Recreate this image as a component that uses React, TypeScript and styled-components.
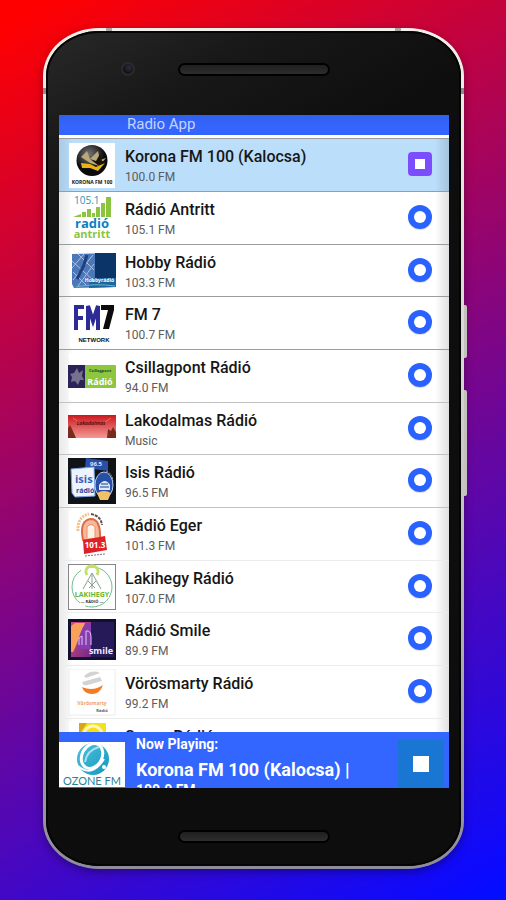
import React, { useState } from "react";
import styled, { createGlobalStyle, css } from "styled-components";

const GlobalStyle = createGlobalStyle`
  *, *::before, *::after { box-sizing: border-box; }
  body {
    margin: 0;
    font-family: Roboto, "Open Sans", sans-serif;
    -webkit-font-smoothing: antialiased;
  }
`;

const Page = styled.main`
  min-height: 100vh;
  padding: 28px 42px 30px 43px;
  display: flex;
  justify-content: center;
  align-items: flex-start;
  background: linear-gradient(150deg, #ff0000 2%, #0a0aff 97%, #0010ff 100%);
`;

const Phone = styled.div`
  position: relative;
  flex: 1;
  max-width: 480px;
  padding: 3px;
  border-radius: 56px / 48px;
  background: linear-gradient(180deg, #f2eeea 0%, #d8d6d2 40%, #8d8c98 100%);
  box-shadow: 0 3px 8px rgba(0, 0, 0, 0.35);
`;

const SideKey = styled.span<{ $top: number; $height: number }>`
  position: absolute;
  right: -3px;
  top: ${(p) => p.$top}px;
  width: 3px;
  height: ${(p) => p.$height}px;
  border-radius: 0 2px 2px 0;
  background: #c4c1be;
`;

const Antenna = styled.span<{ $side: "left" | "right" }>`
  position: absolute;
  top: 0;
  ${(p) => p.$side}: 63px;
  width: 6px;
  height: 3px;
  background: #a8a4a2;
`;

const SideAntenna = styled.span<{ $side: "left" | "right" }>`
  position: absolute;
  top: 60px;
  ${(p) => p.$side}: 0;
  width: 3px;
  height: 6px;
  background: #8f8b8a;
`;

const Body = styled.div`
  border-radius: 53px / 45px;
  padding: 0 12px 0 13px;
  background: linear-gradient(150deg, #292929 0%, #181818 12%, #0e0e0e 26%, #0d0d0d 100%);
  box-shadow: inset 0 0 0 2px #050505;
`;

const TopBezel = styled.div`
  height: 84px;
  padding: 9px 0 17px;
  display: grid;
  grid-template-columns: 1fr 152px 1fr;
  align-items: center;
  align-content: center;
`;

const Camera = styled.span`
  width: 14px;
  height: 14px;
  margin-left: 62px;
  border-radius: 50%;
  border: 2px solid #2b2a2e;
  background: radial-gradient(circle at 60% 35%, #2c2c3c, #111116 70%);
`;

const Speaker = styled.span`
  height: 13px;
  border-radius: 7px;
  border: 2px solid #000;
  background: linear-gradient(180deg, #1f1f1f, #2d2d2d);
`;

const BottomBezel = styled.div`
  height: 78px;
  padding-top: 42px;
  display: grid;
  grid-template-columns: 152px;
  justify-content: center;
  align-items: start;
`;

const Screen = styled.div`
  display: flex;
  flex-direction: column;
  background: #fff;
  overflow: hidden;
`;

const AppBar = styled.header`
  height: 20px;
  padding-left: 68px;
  background: linear-gradient(180deg, #3060ec, #3565ff 60%);
`;

const AppTitle = styled.h1`
  margin: 0;
  font-size: 15px;
  line-height: 18px;
  font-weight: 400;
  color: #c5d4ff;
`;

const Stations = styled.ul`
  list-style: none;
  margin: 0;
  padding: 3px 0 0;
  height: 597px;
  overflow: hidden;
`;

const Station = styled.li<{ $active: boolean; $line: string }>`
  height: 53px;
  display: grid;
  grid-template-columns: 48px 1fr 24px;
  column-gap: 9px;
  align-items: start;
  padding: 3px 17px 0 9px;
  border-top: 1px solid ${(p) => p.$line};
  background: linear-gradient(90deg, rgba(0, 0, 0, 0.09), rgba(0, 0, 0, 0.04) 9px, transparent 14px,
      transparent calc(100% - 14px), rgba(0, 0, 0, 0.12)),
    ${(p) => (p.$active ? "#bbdefb" : "#ffffff")};
  &:nth-child(3n) { height: 52px; }
`;

const StationText = styled.div`
  padding-top: 5px;
`;

const StationName = styled.h2`
  margin: 0;
  font-size: 16px;
  line-height: 20px;
  font-weight: 500;
  color: #161616;
  white-space: nowrap;
`;

const StationBand = styled.p`
  margin: 0;
  font-size: 12px;
  line-height: 20px;
  font-weight: 400;
  color: #5c5c5c;
`;

const Toggle = styled.button<{ $active: boolean }>`
  width: 24px;
  height: 24px;
  margin-top: 10px;
  padding: 0;
  border: 0;
  display: grid;
  place-items: center;
  cursor: pointer;
  ${(p) =>
    p.$active
      ? css`border-radius: 4px; background: #7c4dff;`
      : css`border-radius: 50%; background: #2962ff; box-shadow: 0 1px 1px rgba(0, 0, 0, 0.15);`}
  &::after {
    content: "";
    width: ${(p) => (p.$active ? 10 : 12)}px;
    height: ${(p) => (p.$active ? 10 : 12)}px;
    border-radius: ${(p) => (p.$active ? "0" : "50%")};
    background: #fff;
  }
`;

const Player = styled.footer`
  height: 56px;
  display: grid;
  grid-template-columns: 66px 1fr 46px;
  column-gap: 11px;
  padding-right: 5px;
  background: #3365ff;
  overflow: hidden;
`;

const PlayerArt = styled.div`
  padding-top: 10px;
`;

const PlayerText = styled.div`
  padding-top: 2px;
  color: #fff;
  font-weight: 700;
  white-space: nowrap;
`;

const PlayerLabel = styled.p`
  margin: 0;
  font-size: 14px;
  line-height: 20px;
`;

const PlayerTitle = styled.p`
  margin: 0;
  padding-top: 4px;
  font-size: 18px;
  line-height: 24px;
`;

const PlayerBand = styled.p`
  margin: 0;
  font-size: 14px;
  line-height: 16px;
`;

const StopButton = styled.button`
  height: 48px;
  margin-top: 8px;
  padding: 0;
  border: 0;
  display: grid;
  place-items: center;
  background: #1976d2;
  cursor: pointer;
  &::after {
    content: "";
    width: 16px;
    height: 16px;
    background: #fff;
  }
`;

const Art = styled.svg`
  display: block;
  width: 100%;
  font-family: "Open Sans", sans-serif;
  font-weight: 700;
`;

const Logo = ({ children }: { children: React.ReactNode }) => (
  <Art viewBox="0 0 48 48" aria-hidden="true">
    {children}
  </Art>
);

const Korona = () => (
  <Logo>
    <defs>
      <radialGradient id="kor" cx="40%" cy="30%">
        <stop offset="0" stopColor="#777" />
        <stop offset="1" stopColor="#0a0a0a" />
      </radialGradient>
    </defs>
    <rect x="1" y="1" width="46" height="45" fill="#fff" />
    <circle cx="24" cy="18.500" r="15.500" fill="url(#kor)" />
    <path d="M13 15l6-6 3 8 8-8 2 9 6-2-7 8-9-3z" fill="#b9a878" />
    <path d="M22 17l6 2 4-7 2 7 4 0-7 5z" fill="#1a1408" />
    <path d="M13 21l9 1 6 3 9-4-7 8-8-3-8 0z" fill="#e8b414" />
    <text x="24" y="42" fontSize="5" textAnchor="middle" fill="#111">KORONA FM 100</text>
  </Logo>
);

const Antritt = () => (
  <Logo>
    <rect x="2" width="46" height="47" fill="#fff" />
    <text x="6" y="9" fontSize="10" fontWeight="400" fill="#2b93b8">105.1</text>
    <g fill="#8bc53f">
      <path d="M5 22l8-3v3z" />
      <rect x="14" y="17" width="4" height="5" />
      <rect x="19" y="14" width="4" height="8" />
      <rect x="24" y="18" width="3" height="4" />
      <rect x="28" y="12" width="4" height="10" />
      <rect x="33" y="8" width="4" height="14" />
      <rect x="38" y="2" width="5" height="20" />
    </g>
    <text x="24" y="33" fontSize="13" textAnchor="middle" fill="#0b7fc4">radió</text>
    <text x="24" y="43" fontSize="11" textAnchor="middle" fill="#8bc53f">antritt</text>
  </Logo>
);

const Hobby = () => (
  <Logo>
    <rect x="2" width="46" height="47" fill="#fff" />
    <path d="M4 6l42-1 2 34-42 1-2-4z" fill="#4c78b8" />
    <path d="M27 5h21v25H27z" fill="#0b3568" />
    <path d="M21 30h27v9l-27 1z" fill="#1d67a0" />
    <path d="M4 20l12-14M5 32l20-25M10 38l16-22M4 13l22 20M10 6l16 16M5 24l14 14" stroke="#a9c2e6" strokeWidth="1" />
    <path d="M19 7l-3 10-7 14" stroke="#213f80" strokeWidth="3" fill="none" />
    <text x="46" y="34" fontSize="5" textAnchor="end" fill="#fff">Hobbyrádió</text>
    <path d="M8 39q18-4 39-1" stroke="#63b6cf" fill="none" />
  </Logo>
);

const Fm7 = () => (
  <Logo>
    <rect x="2" width="46" height="47" fill="#fff" />
    <g fill="none" stroke="#2d2c96" strokeWidth="4">
      <path d="M8 30V7h8M8 18h7M20 30V6l5 15 5-15v24" />
    </g>
    <path d="M33 5h13v5l-5 19h-6l5-19h-7z" fill="#0b0b0b" />
    <text x="26" y="42" fontSize="6" fontFamily="Liberation Sans" textAnchor="middle" fill="#111">NETWORK</text>
  </Logo>
);

const Csillagpont = () => (
  <Logo>
    <rect x="1" width="47" height="47" fill="#fff" />
    <rect x="0" y="12" width="48" height="23" rx="1" fill="#8dc63f" />
    <rect x="0" y="12" width="17" height="23" fill="#2b2257" />
    <path d="M9 15l2 5 4-3-1 6 2 4-4 0-2 5-3-4-4 1 1-5-2-3 4-1z" fill="#77718f" />
    <text x="32" y="19" fontSize="4" textAnchor="middle" fill="#264a22">Csillagpont</text>
    <text x="32" y="32" fontSize="9" textAnchor="middle" fill="#fff">Rádió</text>
  </Logo>
);

const Lakodalmas = () => (
  <Logo>
    <defs>
      <linearGradient id="lak" x1="0" y1="0" x2="0" y2="1">
        <stop offset="0" stopColor="#c91820" />
        <stop offset="1" stopColor="#f59a94" />
      </linearGradient>
    </defs>
    <rect x="1" width="47" height="47" fill="#fff" />
    <rect x="0" y="9" width="48" height="23" fill="url(#lak)" />
    <path d="M0 32V22l2-3 2 4 4 9zM39 32l1-9 3 2 2-4 3 5v6z" fill="#7a2a1c" />
    <path d="M5 12l6 4M43 12l-6 4" stroke="#f2703a" />
    <text x="23" y="19" fontSize="5" fontStyle="italic" textAnchor="middle" fill="#5c0d10">Lakodalmas</text>
  </Logo>
);

const Isis = () => (
  <Logo>
    <rect x="0" y="0" width="48" height="46" fill="#101418" />
    <path d="M18 0l22 3v10L17 10z" fill="#2a4fa8" />
    <text x="22" y="8" fontSize="6" fill="#d8e4ff">96.5</text>
    <path d="M3 11l23-2 1 29-20 1-3-4z" fill="#eef4ff" stroke="#7aa0dc" />
    <text x="7" y="25" fontSize="11" fill="#3d63b5">isis</text>
    <text x="8" y="35" fontSize="7" fill="#26489a">rádió</text>
    <ellipse cx="36" cy="27" rx="9" ry="13" fill="#274fa4" stroke="#b9cdf2" />
    <path d="M29 35q7-4 14 0l-3 7h-8z" fill="#f4c067" />
    <path d="M31 27q6-8 11 0v5H31z" fill="#dce8ff" />
    <path d="M33 26h7M32 29h9" stroke="#1d3c80" />
    <path d="M38 13q6 2 7 10" stroke="#9a9a9a" strokeDasharray="2 1" fill="none" />
  </Logo>
);

const Eger = () => (
  <Logo>
    <rect x="1" width="46" height="46" fill="#fff" />
    <path d="M10 20q-1-14 11-17" stroke="#f1c08d" strokeWidth="3" strokeDasharray="2 1" fill="none" />
    <path d="M23 3q10 2 11 11" stroke="#55504c" strokeWidth="2" strokeDasharray="3 1" fill="none" />
    <path d="M15 29q-4-20 8-21 10 0 9 21z" fill="#f6b79d" stroke="#de6b43" strokeWidth="2" />
    <path d="M19 27V16q4-5 8 0v11" fill="#fff1e4" stroke="#e59273" />
    <path d="M15 29l22-4 2 14-23 4z" fill="#e01f26" />
    <text x="27" y="37" fontSize="8" textAnchor="middle" fill="#fff">101.3</text>
    <path d="M17 45l20-2" stroke="#777" strokeDasharray="2 1" />
  </Logo>
);

const Lakihegy = () => (
  <Logo>
    <rect x="0.500" y="0.500" width="47" height="45" fill="#fff" stroke="#858585" />
    <circle cx="24" cy="23" r="20" fill="none" stroke="#6cc08b" strokeWidth="1" strokeDasharray="38 6" />
    <path d="M19 11a6 6 0 1 1 10 0" stroke="#c6df6a" strokeWidth="3" fill="none" />
    <path d="M24 9l-9 16M24 9l9 16M24 9v16M20 17l7 7M28 17l-7 7" stroke="#8aa294" fill="none" />
    <rect x="8" y="26" width="33" height="8" fill="#fff" />
    <text x="24" y="33" fontSize="7" textAnchor="middle" fill="#6ab52e">LAKIHEGY</text>
    <text x="24" y="39" fontSize="4" textAnchor="middle" fill="#333">— RÁDIÓ —</text>
  </Logo>
);

const Smile = () => (
  <Logo>
    <defs>
      <linearGradient id="smi" x1="0" y1="0" x2="1" y2="1">
        <stop offset="0" stopColor="#e04a78" />
        <stop offset="1" stopColor="#6a2a88" />
      </linearGradient>
    </defs>
    <rect x="0" y="3" width="48" height="41" fill="#120f30" />
    <rect x="3" y="6" width="43" height="35" fill="#271a58" />
    <path d="M3 6h20v35H3z" fill="url(#smi)" />
    <path d="M3 10l4-3h10L7 32l-2 4H3z" fill="#f9a05c" />
    <path d="M9 33q2-18 9-26h5v26z" fill="#8a3cae" />
    <path d="M11 29v-7l3-2v9M18 29V15q5-1 5 6v8" stroke="#d7c7f0" fill="none" />
    <text x="45" y="38" fontSize="9" textAnchor="end" fill="#f1ecff">smile</text>
  </Logo>
);

const Vorosmarty = () => (
  <Logo>
    <rect x="1" width="46" height="46" fill="#fff" stroke="#ececec" />
    <path d="M16 7q8-7 16-3l-14 5zM14 13l18-5 2 4-18 5z" fill="#d3d3d3" />
    <path d="M14 18q11 5 21-2-3 9-11 9-8 0-10-7z" fill="#f47b20" />
    <path d="M15 17q8 3 18-2" stroke="#fff" strokeWidth="2" fill="none" />
    <text x="24" y="36" fontSize="5" textAnchor="middle" fill="#f0a070">Vörösmarty</text>
    <text x="34" y="43" fontSize="4" textAnchor="middle" fill="#555">Rádió</text>
  </Logo>
);

const Sunny = () => (
  <Logo>
    <rect x="1" width="46" height="46" fill="#fff" />
    <rect x="11" y="1" width="27" height="30" fill="#f6df1c" />
    <path d="M11 1h8l-8 12z" fill="#d9a516" />
    <circle cx="25" cy="13" r="9" fill="none" stroke="#fff8b8" strokeWidth="3" />
  </Logo>
);

const Ozone = () => (
  <Art viewBox="0 0 66 45" aria-hidden="true">
    <defs>
      <linearGradient id="ozo" x1="0" y1="0" x2="1" y2="1">
        <stop offset="0" stopColor="#4cc3dd" />
        <stop offset="1" stopColor="#1596c0" />
      </linearGradient>
    </defs>
    <rect width="66" height="46" fill="#fff" />
    <circle cx="34" cy="17" r="16" fill="url(#ozo)" />
    <ellipse cx="33" cy="14" rx="10" ry="13" transform="rotate(28 33 14)" fill="none" stroke="#fff" strokeWidth="3" />
    <path d="M19 24q14 12 26-7" stroke="#fff" strokeWidth="2" fill="none" />
    <path d="M26 20Q28 8 40 5" stroke="#a7e0ee" strokeWidth="2" fill="none" />
    <circle cx="45" cy="25" r="2" fill="#fff" />
    <text x="33" y="43" fontSize="11" fontWeight="400" fontFamily="Lato" textAnchor="middle" fill="#2b7f94">OZONE FM</text>
  </Art>
);

const DARK = "#9c9c9c";
const MID = "#c2c2c2";
const PALE = "#ececec";

const stations = [
  { name: "Korona FM 100 (Kalocsa)", band: "100.0 FM", Icon: Korona, line: DARK },
  { name: "Rádió Antritt", band: "105.1 FM", Icon: Antritt, line: DARK },
  { name: "Hobby Rádió", band: "103.3 FM", Icon: Hobby, line: DARK },
  { name: "FM 7", band: "100.7 FM", Icon: Fm7, line: DARK },
  { name: "Csillagpont Rádió", band: "94.0 FM", Icon: Csillagpont, line: DARK },
  { name: "Lakodalmas Rádió", band: "Music", Icon: Lakodalmas, line: MID },
  { name: "Isis Rádió", band: "96.5 FM", Icon: Isis, line: MID },
  { name: "Rádió Eger", band: "101.3 FM", Icon: Eger, line: MID },
  { name: "Lakihegy Rádió", band: "107.0 FM", Icon: Lakihegy, line: PALE },
  { name: "Rádió Smile", band: "89.9 FM", Icon: Smile, line: PALE },
  { name: "Vörösmarty Rádió", band: "99.2 FM", Icon: Vorosmarty, line: PALE },
  { name: "Sunny Rádió", band: "99.4 FM", Icon: Sunny, line: PALE },
];

export default function App() {
  const [current, setCurrent] = useState(0);
  const playing = stations[current];
  return (
    <>
      <GlobalStyle />
      <Page>
        <Phone>
          <Antenna $side="left" />
          <Antenna $side="right" />
          <SideAntenna $side="left" />
          <SideAntenna $side="right" />
          <SideKey $top={277} $height={53} />
          <SideKey $top={362} $height={106} />
          <Body>
            <TopBezel>
              <Camera />
              <Speaker />
            </TopBezel>
            <Screen>
              <AppBar>
                <AppTitle>Radio App</AppTitle>
              </AppBar>
              <Stations>
                {stations.map(({ name, band, Icon, line }, i) => (
                  <Station key={name} $active={i === current} $line={line}>
                    <Icon />
                    <StationText>
                      <StationName>{name}</StationName>
                      <StationBand>{band}</StationBand>
                    </StationText>
                    <Toggle
                      type="button"
                      $active={i === current}
                      aria-label={`${i === current ? "Stop" : "Play"} ${name}`}
                      onClick={() => setCurrent(i)}
                    />
                  </Station>
                ))}
              </Stations>
              <Player>
                <PlayerArt>
                  <Ozone />
                </PlayerArt>
                <PlayerText>
                  <PlayerLabel>Now Playing:</PlayerLabel>
                  <PlayerTitle>{playing.name} |</PlayerTitle>
                  <PlayerBand>{playing.band}</PlayerBand>
                </PlayerText>
                <StopButton type="button" aria-label="Stop" />
              </Player>
            </Screen>
            <BottomBezel>
              <Speaker />
            </BottomBezel>
          </Body>
        </Phone>
      </Page>
    </>
  );
}
